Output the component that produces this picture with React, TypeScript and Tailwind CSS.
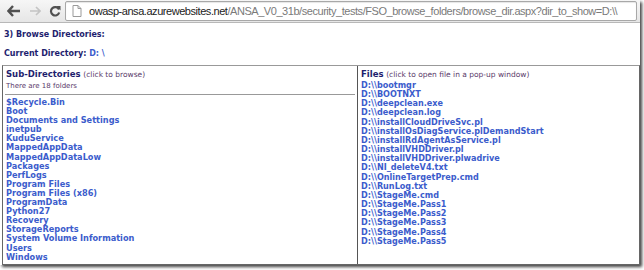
import React from "react";

const dirs = [
  "$Recycle.Bin",
  "Boot",
  "Documents and Settings",
  "inetpub",
  "KuduService",
  "MappedAppData",
  "MappedAppDataLow",
  "Packages",
  "PerfLogs",
  "Program Files",
  "Program Files (x86)",
  "ProgramData",
  "Python27",
  "Recovery",
  "StorageReports",
  "System Volume Information",
  "Users",
  "Windows",
];

const files = [
  "bootmgr",
  "BOOTNXT",
  "deepclean.exe",
  "deepclean.log",
  "installCloudDriveSvc.pl",
  "installOsDiagService.plDemandStart",
  "installRdAgentAsService.pl",
  "installVHDDriver.pl",
  "installVHDDriver.plwadrive",
  "NI_deleteV4.txt",
  "OnlineTargetPrep.cmd",
  "RunLog.txt",
  "StageMe.cmd",
  "StageMe.Pass1",
  "StageMe.Pass2",
  "StageMe.Pass3",
  "StageMe.Pass4",
  "StageMe.Pass5",
];

export default function App() {
  return (
    <div className="w-[644px] h-[270px] bg-white relative overflow-hidden">
      <div className="w-[640px] h-[265px] bg-white shadow-[2px_2px_3px_rgba(0,0,0,0.75)] flex flex-col">
        {/* toolbar */}
        <div className="h-[23px] shrink-0 bg-gradient-to-b from-[#f6f6f6] to-[#e6e6e6] border-b border-[#b8b8b8] flex items-center">
          <div className="flex items-center w-[65px] pl-[7px] gap-[8px]">
            <svg width="14" height="12" viewBox="0 0 14 12">
              <path d="M6 1 L1.5 6 L6 11 M1.5 6 H13" stroke="#505050" strokeWidth="2.4" fill="none" />
            </svg>
            <svg width="12" height="10" viewBox="0 0 12 10">
              <path d="M7 1 L11 5 L7 9 M11 5 H1" stroke="#c4c4c4" strokeWidth="1.6" fill="none" />
            </svg>
            <svg width="12" height="12" viewBox="0 0 12 12">
              <path d="M10 4.5 A4.2 4.2 0 1 0 10.2 7.5" stroke="#505050" strokeWidth="2.2" fill="none" />
              <path d="M7.5 1 L11.5 1 L11.5 5.5 Z" fill="#505050" />
            </svg>
          </div>
          <div className="h-[20px] w-[572px] bg-white border border-[#a8a8a8] rounded-[2px] flex items-center pl-[6px] shadow-[inset_0_1px_1px_rgba(0,0,0,0.1)] overflow-hidden">
            <svg width="10" height="12" viewBox="0 0 10 12" className="mr-[7px] shrink-0">
              <path d="M1 0.5 H6 L9 3.5 V11.5 H1 Z M6 0.5 V3.5 H9" stroke="#9a9a9a" strokeWidth="1" fill="#fff" />
            </svg>
            <span className="text-[11px] leading-none whitespace-nowrap tracking-[-0.45px]" style={{ fontFamily: "'Liberation Sans', Arial, sans-serif" }}>
              <span className="text-[#222]">owasp-ansa.azurewebsites.net</span>
              <span className="text-[#7a7a7a]">/ANSA_V0_31b/security_tests/FSO_browse_folders/browse_dir.aspx?dir_to_show=D:\\</span>
            </span>
          </div>
        </div>

        {/* content */}
        <div className="flex-1 flex flex-col" style={{ fontFamily: "'DejaVu Sans', Verdana, sans-serif" }}>
          <div className="pl-[4px] pt-[7px] text-[8px] leading-[10px] font-bold text-[#1e1e6e]">3) Browse Directories:</div>
          <div className="pl-[4px] pt-[9px] text-[8px] leading-[10px] font-bold text-[#1e1e6e]">
            Current Directory: <span className="text-[#3b5ccc]">D: \</span>
          </div>
          <div className="mt-[6px] ml-[2px] flex-1 border border-[#666] border-t-[#999] flex">
            <div className="w-[355px] border-r border-[#555] px-[1px] pt-[3px]">
              <div className="pl-[2px] text-[8.5px] leading-[10px]">
                <span className="font-bold text-[#1e1e6e]">Sub-Directories</span>{" "}
                <span className="text-[7.5px] text-[#5a3a6a]">(click to browse)</span>
              </div>
              <div className="pl-[2px] pt-[1px] text-[7px] leading-[10px] text-[#5a3a6a]">There are 18 folders</div>
              <div className="mt-[3px] mb-[3px] mx-[1px] border-t border-[#999]" />
              <div className="pl-[2px] text-[8.2px] leading-[9.1px] font-bold text-[#3b5ccc]">
                {dirs.map((d) => (
                  <div key={d}>{d}</div>
                ))}
              </div>
            </div>
            <div className="flex-1 pl-[3px] pt-[3px]">
              <div className="text-[8.5px] leading-[10px]">
                <span className="font-bold text-[#1e1e6e]">Files</span>{" "}
                <span className="text-[7.5px] text-[#5a3a6a]">(click to open file in a pop-up window)</span>
              </div>
              <div className="pt-[1px] text-[8.1px] leading-[9.15px] font-bold text-[#3b5ccc]">
                {files.map((f) => (
                  <div key={f}>D:\\{f}</div>
                ))}
              </div>
            </div>
          </div>
        </div>
      </div>
    </div>
  );
}
